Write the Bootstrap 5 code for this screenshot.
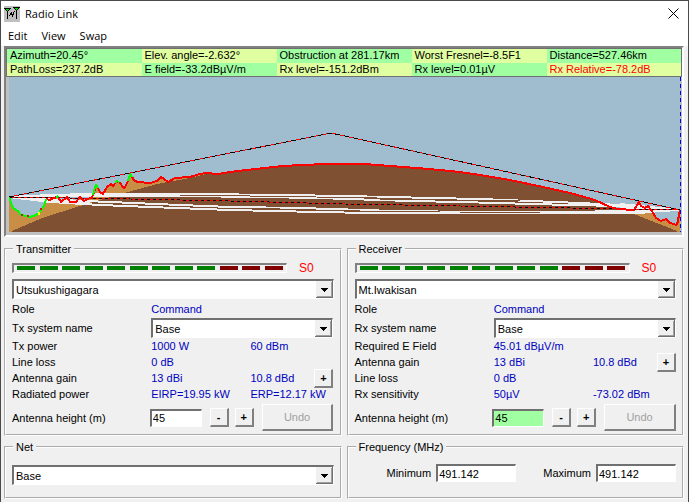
<!DOCTYPE html>
<html lang="en">
<head>
<meta charset="utf-8">
<meta name="viewport" content="width=device-width, initial-scale=1">
<title>Radio Link</title>
<link href="https://cdn.jsdelivr.net/npm/bootstrap@5.3.0/dist/css/bootstrap.min.css" rel="stylesheet">
<style>
body{font:11px/14px "Liberation Sans",Arial,sans-serif;color:#000;background:#f0f0f0}
.window{min-height:100vh;border:solid #4a4a4a;border-width:1px 1px 0}
.titlebar{height:25px;padding:0 8px 0 3px;gap:5px;font:11px/16px "Open Sans",sans-serif}
.titlebar h1{font:inherit}
.menubar{height:20px;padding:0 7px;gap:14px;font:11px/20px "Open Sans",sans-serif}
.menubar a{color:#000;text-decoration:none}
.close-btn{border:0;background:none;padding:0;line-height:0}
.profile{margin:0 4px 0 3px;border:2px solid #808080;border-color:#808080 #fff #fff #808080;background:#c0c0c0}
.readout{width:100%;table-layout:fixed;border:1px solid #707070;line-height:13px;height:29px}
.readout td{padding:0 0 0 3px;white-space:nowrap;background:#a0ffa0}
.readout tr:nth-child(odd) td:nth-child(even),.readout tr:nth-child(even) td:nth-child(odd){background:#e0ffa0}
.readout .alarm{color:#f00}
.plot{padding:0 1px 3px 3px}
.plot svg{width:100%;height:155px}
.panels{display:grid;grid-template-columns:1fr 1fr;gap:5px;padding:5px 4px 0 3px}
.group{border:2px groove #fff;padding:5px 6px 2px}
.group legend{float:none;width:auto;margin:0 0 0 1px;padding:0 3px;font-size:11px;line-height:14px}
.meter-row{padding-bottom:4px}
.meter{flex:0 0 275px;height:10px;border:solid;border-width:2px 1px 1px 2px;border-color:#808080 #fff #fff #808080;padding:1px 3px 0;display:flex;justify-content:space-between}
.meter i{width:18px;height:4px;background:#008000}
.meter i:nth-child(n+10){background:#800000}
.s-unit{color:#f00;font-size:12px;margin-left:12px}
.combo{display:block;width:100%;height:20px;appearance:none;border:solid;border-width:2px 1px 1px 2px;border-color:#707070 #fff #fff #707070;border-radius:0;color:#000;font:inherit;padding:0 20px 0 2px;background:#fff url("data:image/svg+xml,%3Csvg xmlns='http://www.w3.org/2000/svg' width='17' height='17' shape-rendering='crispEdges'%3E%3Cpath fill='%23f0f0f0' d='M0 0h17v17H0z'/%3E%3Cpath fill='%23707070' d='M16 0h1v17H0v-1h16z'/%3E%3Cpath fill='%23a0a0a0' d='M15 1h1v15H1v-1h14z'/%3E%3Cpath d='M5 7h7v1H5zm1 1h5v1H6zm1 1h3v1H7zm1 1h1v1H8z'/%3E%3C/svg%3E") right center no-repeat}
.specs{display:grid;grid-template-columns:139fr 99fr 64fr 19px;grid-template-rows:19px 20px repeat(4,16px);align-items:center;white-space:nowrap}
.specs output{color:#0000c0}
.wide{grid-column:span 3}
.span-two{grid-column:span 2}
.height-row{display:grid;grid-template-columns:138fr 60fr 25fr 27fr 72fr;align-items:center;height:30px;padding-top:1px}
.field{height:18px;width:52px;border:solid;border-width:2px 1px 1px 2px;border-color:#707070 #fff #fff #707070;border-radius:0;padding:0 1px;font:inherit;color:#000;background:#fff}
.field.active-field{background:#a0ffa0}
.key{width:19px;height:19px;border:solid;border-width:1px 2px 2px 1px;border-color:#fff #808080 #808080 #fff;background:#f0f0f0;color:#000;padding:0;font:inherit;font-weight:bold;line-height:14px}
.key.undo{width:100%;height:27px}
.key.undo:disabled{color:#a0a0a0;font-weight:normal}
.band{gap:5px;padding:5px 0 13px 32px}
.band .field{width:80px;flex:none}
.net-body{padding:6px 0 8px}
.group-low{margin-top:-1px}
</style>
<script src="https://cdn.jsdelivr.net/npm/bootstrap@5.3.0/dist/js/bootstrap.bundle.min.js"></script>
</head>
<body>
<div class="window d-flex flex-column">
<header class="bg-white">
<div class="titlebar d-flex align-items-center">
<svg width="16" height="16" viewBox="0 0 16 16" shape-rendering="crispEdges" aria-hidden="true"><path fill="#c0c0c0" d="M0 0h16v16H0z"/><path d="M0 2h7v1H0zM9 1h7v1H9zM3 5h1v8H3zM12 4h1v9h-1zM1 3h1v1H1zM5 3h1v1H5zM2 4h1v1H2zM4 4h1v1H4zM10 2h1v1h-1zM14 2h1v1h-1zM11 3h1v1h-1zM13 3h1v1h-1zM5 9h1v1H5zM6 7h1v2H6zM7 6h1v3H7zM8 8h1v3H8zM9 6h1v3H9zM10 5h1v1h-1z"/><path fill="#00e000" d="M2 3h3v1H2zM3 4h1v1H3zM11 2h3v1h-3zM12 3h1v1h-1z"/></svg>
<h1 class="m-0 flex-grow-1">Radio Link</h1>
<button class="close-btn" type="button" aria-label="Close"><svg width="13" height="13" viewBox="0 0 13 13"><path d="M1.500 1.500l10 10m0-10l-10 10" stroke="#000" fill="none"/></svg></button>
</div>
<nav class="menubar d-flex" aria-label="Main menu"><a href="#">Edit</a><a href="#">View</a><a href="#">Swap</a></nav>
</header>
<main>
<section class="profile" aria-label="Path profile">
<table class="readout"><tbody>
<tr><td>Azimuth=20.45°</td><td>Elev. angle=-2.632°</td><td>Obstruction at 281.17km</td><td>Worst Fresnel=-8.5F1</td><td>Distance=527.46km</td></tr>
<tr><td>PathLoss=237.2dB</td><td>E field=-33.2dBµV/m</td><td>Rx level=-151.2dBm</td><td>Rx level=0.01µV</td><td class="alarm">Rx Relative=-78.2dB</td></tr>
</tbody></table>
<div class="plot"><svg class="d-block" viewBox="9 77 672 155" preserveAspectRatio="none" shape-rendering="crispEdges" role="img" aria-label="Terrain profile between the stations">
<path fill="#a0bccf" d="M9 77h672v155H9z"/>
<path fill="#c88e46" d="M9 197L13 208 18 211 21 215 27 216 30 217 36 215 39 213 41 210 44 206 46 199 50 200 53 198 58 197 61 202 67 197 70 202 76 202 80 197 84 201 92 197 94 193 96 184 100 192 103 194 107 187 111 184 113 186 117 181 121 184 124 189 128 181 130 174 134 180 137 182 150 183 157 181 161 177 164 179 168 182 175 178 190 177 200 174 206 173 218 174 230 172V232H9zM600 202L610 207 618 209 634 210 637 205 639 202 641 206 645 208 648 206 652 211 656 218 661 221 666 219 670 223 677 225 680 210V232H600z"/>
<path fill="#805033" d="M12 231L42 218 80 206 128 192 157 184 190 178 206 174 230 172 255 169 283 166 302 165 327 164 364 164 390 166 417 168 440 170 460 172 480 175 510 180 543 187 570 193 595 200 610 207 634 214 677 231V232H12z"/>
<path fill="#f0f0f0" d="M620 203L640 205 680 210 620 212zM9 197L90 194V196L9 197 90 201V204L50 201z"/>
<path fill="none" stroke="#f0f0f0" stroke-width="2" d="M9 197L50 195 90 194 190 194 286 195 344 196 390 197 432 198 480 199 530 201 580 203 640 206 680 210M9 197L80 196 180 196 260 197 317 198 410 201 460 202 570 205 620 206 680 210M9 197L60 200 110 202 180 205 230 207 300 208 395 211 480 212 570 212 620 211 680 210M9 197L50 202 100 205 150 207 230 210 318 212 370 213 480 213 560 213 620 213 680 210"/>
<path fill="none" stroke="#805033" d="M180 195.500h70M250 196.500h60M317 197.500h60M380 199.500h60M450 200.500h70M240 208.500h40M300 210.500h60M360 211.500h80M460 212.500h80"/>
<path fill="#c88e46" d="M634 212L645 211 652 211 656 218 661 221 666 219 670 223 677 225 680 212V232L677 231 634 214z"/>
<path fill="#f0f0f0" d="M600 211H640L672 210 680 210 640 214H600z"/>
<g id="centre-path" fill="none" stroke="#f00"><path d="M9 197L130 199 230 201 345 204 460 206 680 210"/><path stroke="#000" stroke-dasharray="3 3" d="M9 197L130 199 230 201 345 204 460 206 680 210"/></g>
<path fill="none" stroke="#f00" d="M9 197L331 133 680 210"/><path fill="none" stroke="#000" stroke-dasharray="5 4" d="M9 197L331 133 680 210"/>
<path fill="none" stroke="#f00" stroke-width="2" stroke-linejoin="bevel" d="M46 199L50 200 53 198 58 197 61 202 67 197 70 202 76 202 80 197 84 201 92 197 94 193 96 184 100 192 103 194 107 187 111 184 113 186 117 181 121 184 124 189 128 181 130 174 134 180 137 182 150 183 157 181 161 177 164 179 168 182 175 178 190 177 200 174 206 173 218 174 230 172 255 169 283 166 302 165 327 164 364 164 390 166 417 168 440 170 460 172 480 175 510 180 543 187 570 193 595 200 610 207 618 209 634 210 637 205 639 202 641 206 645 208 648 206 652 211 656 218 661 221 666 219 670 223 677 225 680 210"/>
<path fill="none" stroke="#0f0" stroke-width="2" stroke-linejoin="bevel" d="M9 197L13 208 18 211 21 215 27 216 30 217 36 215 39 213 41 210 44 206 46 199M56 198L58 196M93 195L94 191 96 184 98 188M115 183L117 181 119 182M128 181L130 174 132 177"/>
<path fill="#c02000" d="M21 214h2v2h-2zM27 215h2v2h-2zM40 208h2v2h-2z"/><path fill="#ff0" d="M38 212h2v3h-2z"/>
<path fill="none" stroke="#00f" stroke-dasharray="4 3" d="M680.500 77v155"/>
</svg></div>
</section>
<form class="panels">
<fieldset class="group"><legend>Transmitter</legend>
<div class="meter-row d-flex align-items-center"><div class="meter" role="img" aria-label="Transmitter signal meter"><i></i><i></i><i></i><i></i><i></i><i></i><i></i><i></i><i></i><i></i><i></i><i></i></div><span class="s-unit">S0</span></div>
<select class="combo" aria-label="Transmitter station"><option>Utsukushigagara</option></select>
<div class="specs">
<span>Role</span><output class="wide">Command</output>
<label for="tx-system">Tx system name</label><select class="combo wide" id="tx-system"><option>Base</option></select>
<span>Tx power</span><output>1000 W</output><output class="span-two">60 dBm</output>
<span>Line loss</span><output class="wide">0 dB</output>
<span>Antenna gain</span><output>13 dBi</output><output>10.8 dBd</output><button class="key" type="button" aria-label="Antenna details">+</button>
<span>Radiated power</span><output>EIRP=19.95 kW</output><output class="span-two">ERP=12.17 kW</output>
</div>
<div class="height-row"><label for="tx-height">Antenna height (m)</label><input class="field" id="tx-height" value="45"><button class="key" type="button">-</button><button class="key" type="button">+</button><button class="key undo" type="button" disabled>Undo</button></div>
</fieldset>
<fieldset class="group"><legend>Receiver</legend>
<div class="meter-row d-flex align-items-center"><div class="meter" role="img" aria-label="Receiver signal meter"><i></i><i></i><i></i><i></i><i></i><i></i><i></i><i></i><i></i><i></i><i></i><i></i></div><span class="s-unit">S0</span></div>
<select class="combo" aria-label="Receiver station"><option>Mt.Iwakisan</option></select>
<div class="specs">
<span>Role</span><output class="wide">Command</output>
<label for="rx-system">Rx system name</label><select class="combo wide" id="rx-system"><option>Base</option></select>
<span>Required E Field</span><output class="wide">45.01 dBµV/m</output>
<span>Antenna gain</span><output>13 dBi</output><output>10.8 dBd</output><button class="key" type="button" aria-label="Antenna details">+</button>
<span>Line loss</span><output class="wide">0 dB</output>
<span>Rx sensitivity</span><output>50µV</output><output class="span-two">-73.02 dBm</output>
</div>
<div class="height-row"><label for="rx-height">Antenna height (m)</label><input class="field active-field" id="rx-height" value="45"><button class="key" type="button">-</button><button class="key" type="button">+</button><button class="key undo" type="button" disabled>Undo</button></div>
</fieldset>
<fieldset class="group group-low"><legend>Net</legend><div class="net-body"><select class="combo" aria-label="Net"><option>Base</option></select></div></fieldset>
<fieldset class="group group-low"><legend>Frequency (MHz)</legend>
<div class="band d-flex align-items-center"><label for="f-min">Minimum</label><input class="field" id="f-min" value="491.142"><label class="ms-auto" for="f-max">Maximum</label><input class="field" id="f-max" value="491.142"></div></fieldset>
</form>
</main>
</div>
</body>
</html>
